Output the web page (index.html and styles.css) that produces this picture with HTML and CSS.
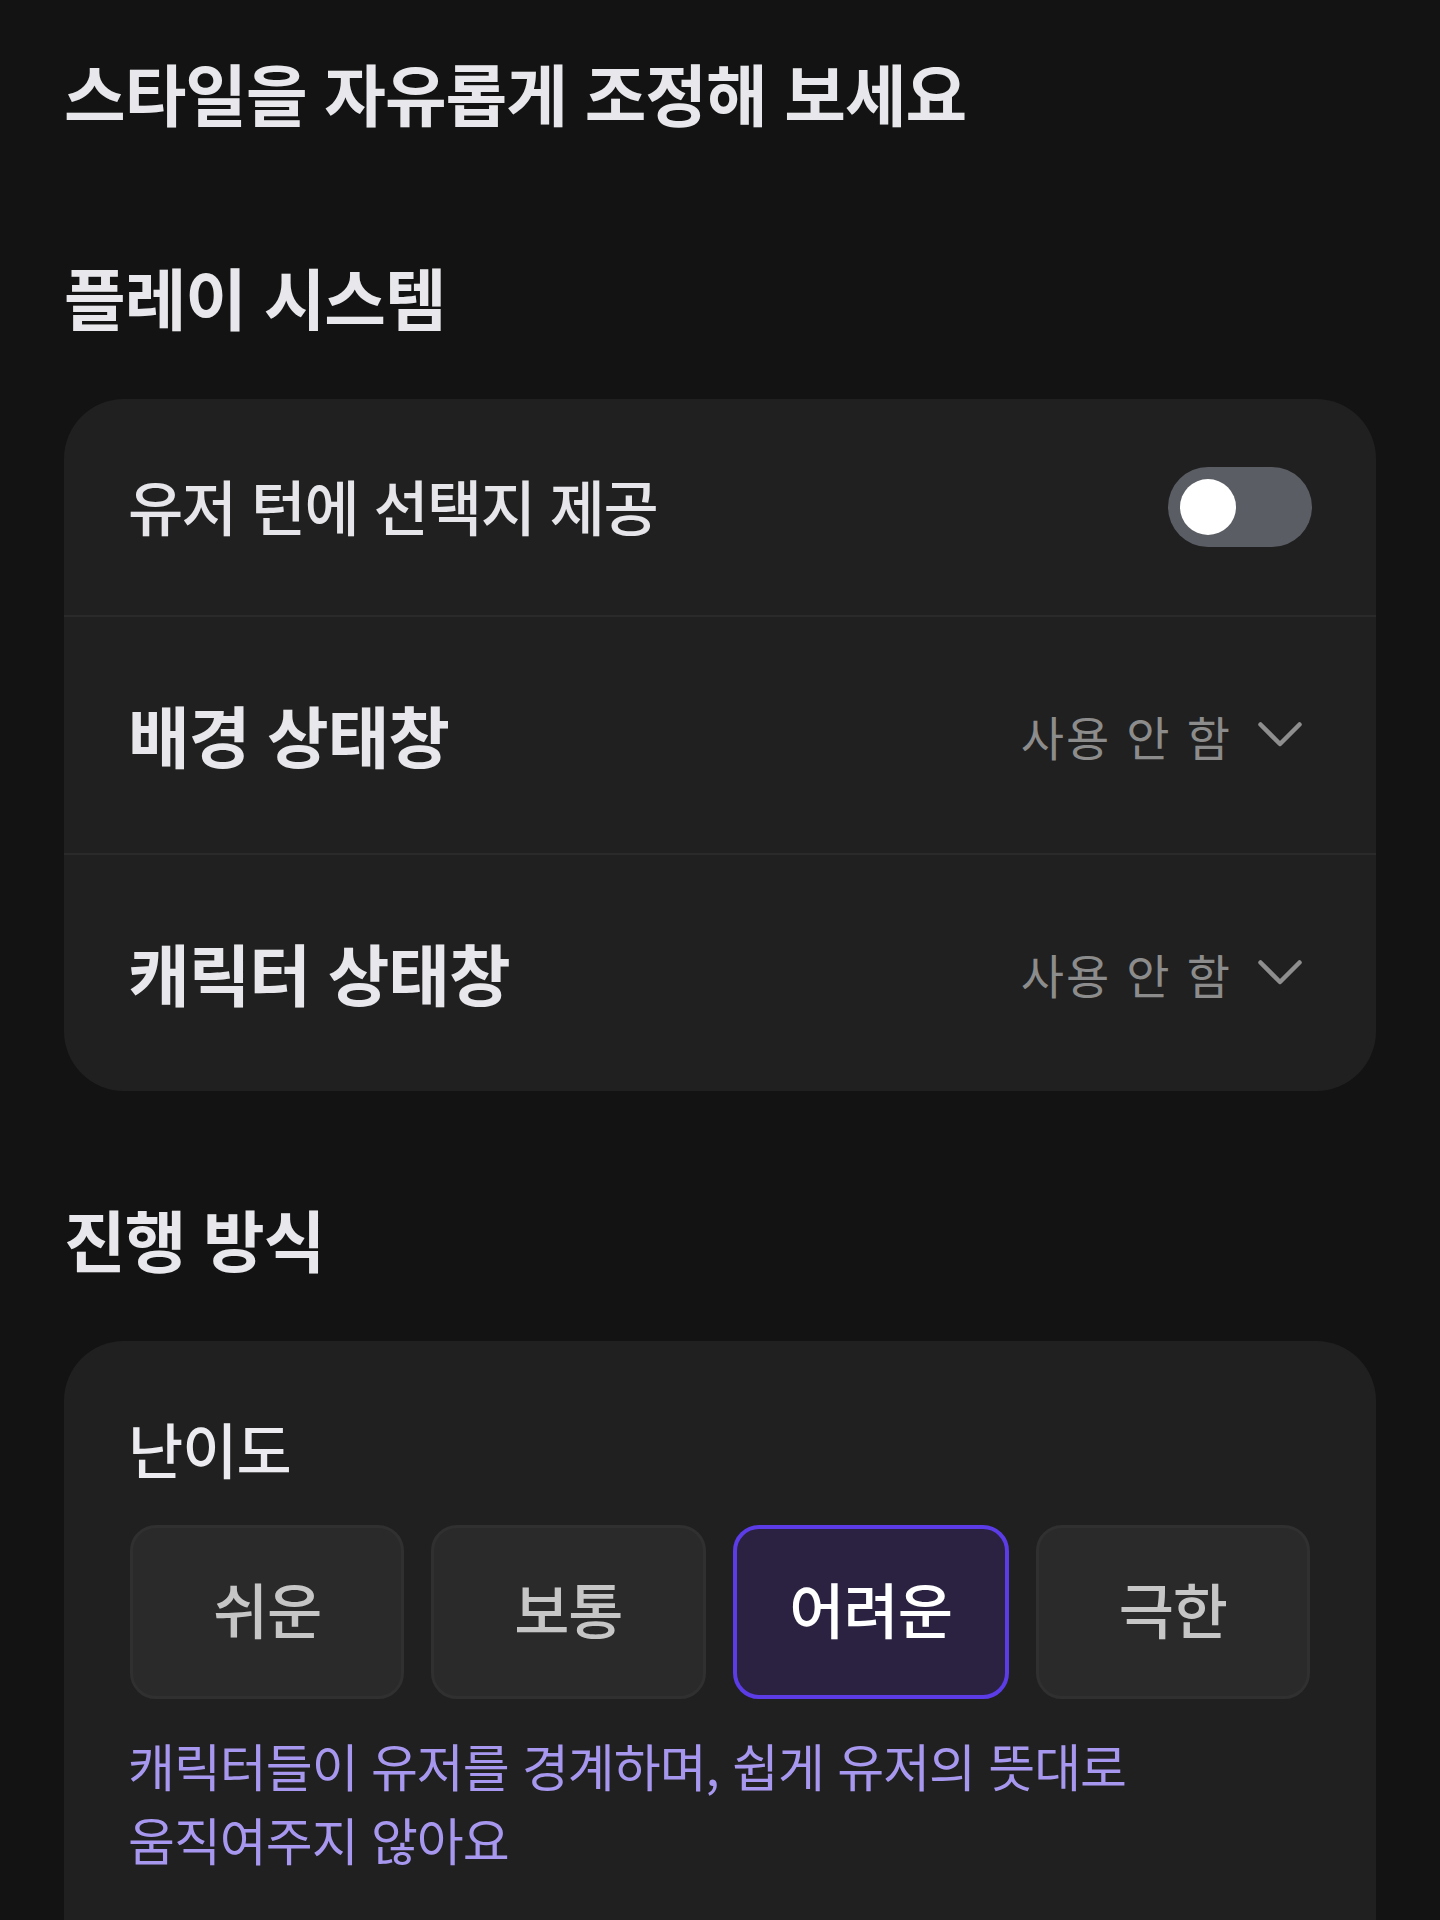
FILE: index.html
```html
<!DOCTYPE html>
<html lang="ko">
<head>
<meta charset="utf-8">
<title>스타일 설정</title>
<link rel="stylesheet" href="styles.css">
</head>
<body>
<main class="page">
  <h1 class="title">스타일을 자유롭게 조정해 보세요</h1>

  <h2 class="section-title">플레이 시스템</h2>
  <section class="card">
    <div class="row row-toggle">
      <span class="row-label">유저 턴에 선택지 제공</span>
      <span class="toggle"><span class="knob"></span></span>
    </div>
    <div class="row row-select">
      <span class="row-label-bold">배경 상태창</span>
      <span class="select">
        <span class="select-value">사용 안 함</span>
        <svg class="chevron" width="44" height="48" viewBox="0 0 44 48"><polyline points="2.5,13.5 22,33 41.5,13.5" fill="none" stroke="#8e8e8e" stroke-width="4.5" stroke-linecap="round" stroke-linejoin="round"/></svg>
      </span>
    </div>
    <div class="row row-select">
      <span class="row-label-bold">캐릭터 상태창</span>
      <span class="select">
        <span class="select-value">사용 안 함</span>
        <svg class="chevron" width="44" height="48" viewBox="0 0 44 48"><polyline points="2.5,13.5 22,33 41.5,13.5" fill="none" stroke="#8e8e8e" stroke-width="4.5" stroke-linecap="round" stroke-linejoin="round"/></svg>
      </span>
    </div>
  </section>

  <h2 class="section-title section-title-2">진행 방식</h2>
  <section class="card card-2">
    <div class="field-label">난이도</div>
    <div class="options">
      <div class="option">쉬운</div>
      <div class="option">보통</div>
      <div class="option option-active">어려운</div>
      <div class="option">극한</div>
    </div>
    <p class="desc">캐릭터들이 유저를 경계하며, 쉽게 유저의 뜻대로<br>움직여주지 않아요</p>
  </section>
</main>
</body>
</html>
```

FILE: styles.css
```css
html, body {
  margin: 0;
  padding: 0;
  background: #131313;
}
body {
  font-family: "Noto Sans CJK KR", "Noto Sans", sans-serif;
  color: #e8e8ec;
  height: 1920px;
  overflow: hidden;
}
.page {
  padding: 52px 64px 0 64px;
}
.title {
  margin: 0;
  font-size: 67px;
  line-height: 80px;
  font-weight: 700;
  letter-spacing: -1px;
  color: #e8e8ec;
}
.section-title {
  margin: 124px 0 0 0;
  font-size: 67px;
  line-height: 80px;
  font-weight: 700;
  letter-spacing: -1px;
  color: #e8e8ec;
}
.section-title-2 {
  margin-top: 107px;
}
.card {
  margin-top: 63px;
  background: #202020;
  border-radius: 60px;
  overflow: hidden;
}
.row {
  display: flex;
  align-items: center;
  justify-content: space-between;
  padding: 0 64px 0 64px;
}
.row-toggle {
  height: 216px;
}
.row-select {
  height: 236px;
  border-top: 2px solid #2a2a2a;
}
.row-label {
  font-size: 60px;
  font-weight: 500;
  letter-spacing: -1.5px;
  color: #e6e6ea;
  padding-bottom: 6px;
}
.row-label-bold {
  font-size: 67px;
  font-weight: 700;
  letter-spacing: -1px;
  color: #e8e8ec;
  padding-bottom: 4px;
}
.toggle {
  width: 144px;
  height: 80px;
  border-radius: 40px;
  background: #5a5d64;
  display: flex;
  align-items: center;
  padding-left: 12px;
  box-sizing: border-box;
}
.knob {
  width: 56px;
  height: 56px;
  border-radius: 50%;
  background: #ffffff;
}
.select {
  display: flex;
  align-items: center;
  gap: 26px;
}
.select-value {
  font-size: 47px;
  font-weight: 400;
  letter-spacing: 2px;
  color: #8c8c8c;
}
.chevron {
  display: block;
  margin-right: 10px;
}
.card-2 {
  margin-top: 63px;
  padding: 74px 66px 60px 66px;
  border-radius: 60px 60px 0 0;
  min-height: 700px;
}
.field-label {
  margin-left: -2px;
  font-size: 60px;
  line-height: 66px;
  font-weight: 500;
  letter-spacing: -1px;
  color: #ececf0;
}
.options {
  margin-top: 44px;
  display: flex;
  gap: 27px;
}
.option {
  flex: 1;
  height: 174px;
  box-sizing: border-box;
  border-radius: 26px;
  background: #2a2a2a;
  border: 3px solid #303030;
  display: flex;
  align-items: center;
  justify-content: center;
  padding-bottom: 10px;
  font-size: 60px;
  font-weight: 500;
  color: #c6c6c6;
  letter-spacing: -1px;
}
.option-active {
  background: #2a2240;
  border: 4px solid #5c3ce6;
  color: #ffffff;
}
.desc {
  margin: 29px 0 0 -2px;
  font-size: 51px;
  line-height: 74px;
  font-weight: 400;
  letter-spacing: -1px;
  color: #a897ee;
}
```
